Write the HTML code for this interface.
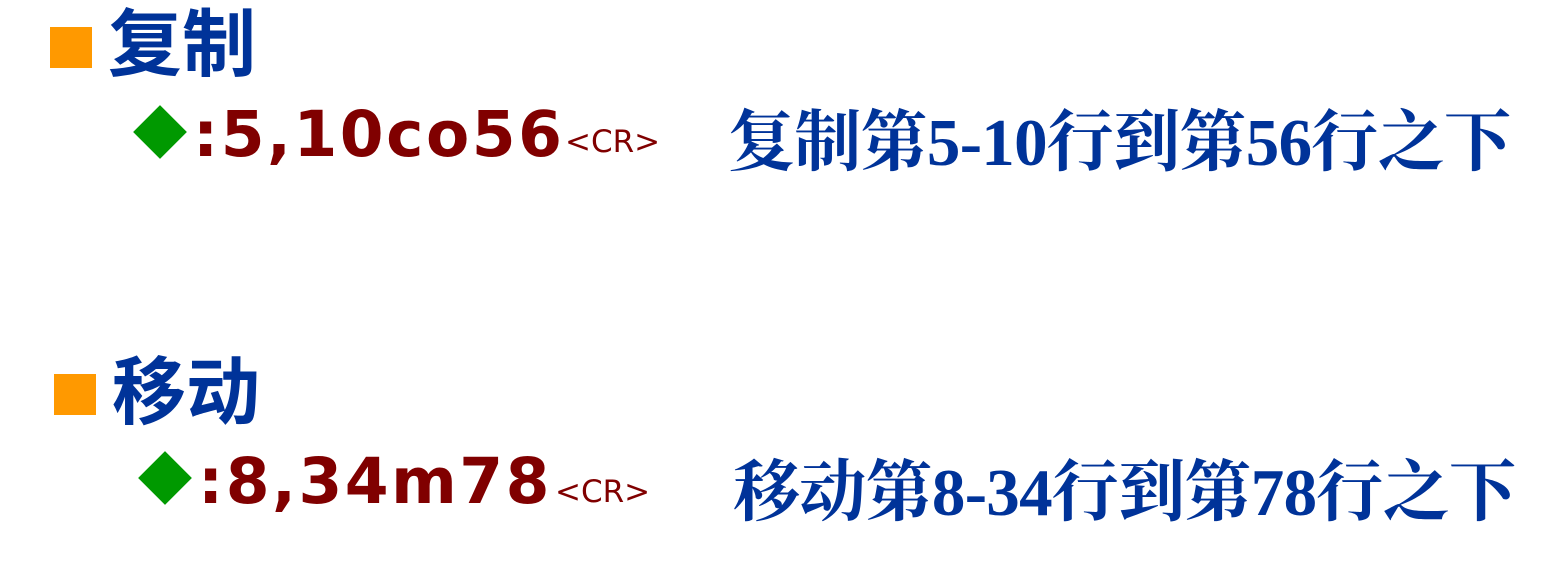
<!DOCTYPE html>
<html><head><meta charset="utf-8"><style>
html,body{margin:0;padding:0;background:#fff;width:1549px;height:573px;overflow:hidden;position:relative}
.a{position:absolute;white-space:nowrap;line-height:1}
.sq{position:absolute;background:#ff9900}
.dm{position:absolute;width:38px;height:38px;background:#009900;transform:rotate(45deg)}
.t{font-family:"Liberation Sans","Noto Sans CJK SC",sans-serif;font-weight:bold;color:#003399;font-size:74px}
.c{font-family:"DejaVu Sans","Liberation Sans",sans-serif;font-weight:bold;color:#800000;font-size:63px;letter-spacing:2.5px}
.cr{font-family:"DejaVu Sans","Liberation Sans",sans-serif;color:#800000;font-size:31px}
.r{font-family:"Liberation Serif","Noto Serif CJK SC",serif;font-weight:bold;color:#003399;font-size:67px;letter-spacing:-0.7px}
</style></head><body>
<div class="sq" style="left:50px;top:27px;width:42px;height:41px"></div>
<div class="a t" style="left:108px;top:8px">复制</div>
<div class="dm" style="left:141px;top:113px"></div>
<div class="a c" style="left:193px;top:103px">:5,10co56</div>
<div class="a cr" style="left:565px;top:127px">&lt;CR&gt;</div>
<div class="a r" style="left:728px;top:110px">复制第5-10行到第56行之下</div>

<div class="sq" style="left:54px;top:374px;width:42px;height:41px"></div>
<div class="a t" style="left:112px;top:356px">移动</div>
<div class="dm" style="left:146px;top:459px"></div>
<div class="a c" style="left:198px;top:450px">:8,34m78</div>
<div class="a cr" style="left:555px;top:477px">&lt;CR&gt;</div>
<div class="a r" style="left:733px;top:460px">移动第8-34行到第78行之下</div>
</body></html>
